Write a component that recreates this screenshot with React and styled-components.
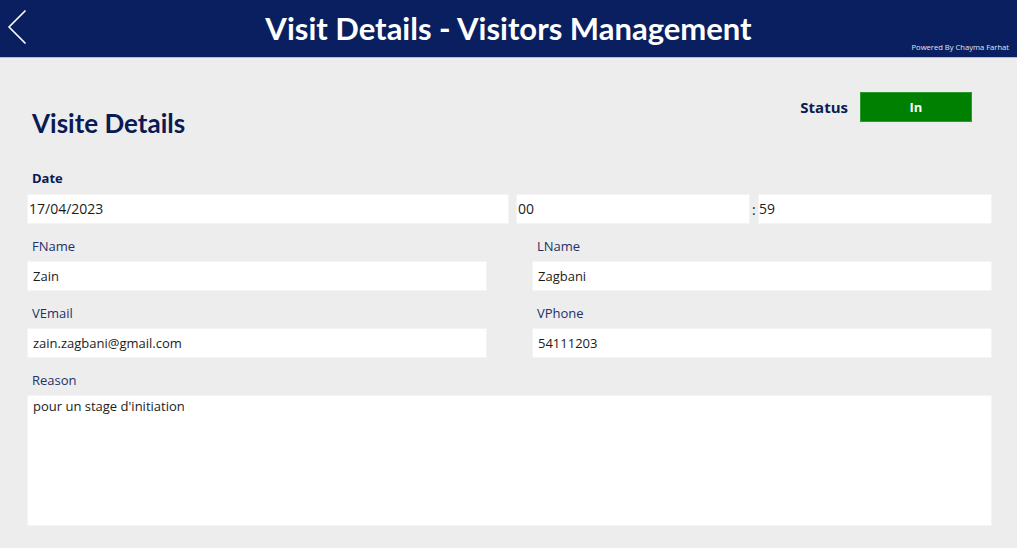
import React from "react";
import styled, { createGlobalStyle } from "styled-components";

const GlobalStyle = createGlobalStyle`
  html, body {
    margin: 0;
    padding: 0;
    background: #ededed;
    font-family: "Open Sans", "Liberation Sans", sans-serif;
  }
  * {
    box-sizing: border-box;
  }
`;

const Header = styled.header`
  height: 58px;
  background: #0a1f5f;
  border-bottom: 1px solid #b9bdca;
  display: grid;
  grid-template-columns: 1fr auto 1fr;
  align-items: start;
`;

const BackButton = styled.div`
  width: 30px;
  height: 40px;
  margin: 9px 0 0 7px;
  cursor: pointer;
`;

const Title = styled.h1`
  margin: 8px 0 0;
  font-family: Lato, "Liberation Sans", sans-serif;
  font-weight: 700;
  font-size: 31px;
  line-height: 40px;
  color: #ffffff;
  white-space: nowrap;
`;

const Powered = styled.div`
  justify-self: end;
  align-self: end;
  margin: 0 8px 5px 0;
  font-size: 7.6px;
  line-height: 10px;
  color: #e2e5ee;
  white-space: nowrap;
`;

const Main = styled.main`
  padding: 34px 25px 22px 27px;
`;

const TopRow = styled.div`
  display: flex;
  justify-content: space-between;
  align-items: flex-start;
  padding-right: 20px;
`;

const Heading = styled.h2`
  margin: 15px 0 0 5px;
  font-family: Lato, "Liberation Sans", sans-serif;
  font-weight: 700;
  font-size: 26px;
  line-height: 32px;
  color: #0b1a52;
`;

const StatusGroup = styled.div`
  display: flex;
  align-items: center;
  gap: 12px;
`;

const StatusLabel = styled.span`
  font-weight: 700;
  font-size: 15px;
  color: #0b1a52;
`;

const StatusBadge = styled.div`
  width: 112px;
  height: 30px;
  background: ${(p) => p.$color};
  border: 1px solid #2a9a2a;
  color: #ffffff;
  font-weight: 700;
  font-size: 13px;
  display: flex;
  align-items: center;
  justify-content: center;
`;

const Label = styled.div`
  padding-left: 5px;
  font-size: 13px;
  line-height: 18px;
  font-weight: ${(p) => (p.$bold ? 700 : 400)};
  color: ${(p) => (p.$bold ? "#0b1a52" : "#24306a")};
`;

const DateBlock = styled.div`
  margin-top: 30px;
  display: flex;
  flex-direction: column;
  gap: 7px;
`;

const DateRow = styled.div`
  display: grid;
  grid-template-columns: 489px 234px 8px 234px;
  align-items: center;
`;

const Box = styled.div`
  width: ${(p) => (p.$width ? `${p.$width}px` : "auto")};
  height: ${(p) => p.$height || 30}px;
  background: #ffffff;
  border: 1px solid #f4f4f4;
  padding: ${(p) => p.$pad || "0 5px"};
  font-size: ${(p) => p.$size || 13}px;
  line-height: ${(p) => (p.$height ? "18px" : "28px")};
  color: #1c1c1c;
  white-space: nowrap;
  overflow: hidden;
`;

const Colon = styled.span`
  font-size: 14px;
  color: #1c1c1c;
  padding-left: 2px;
`;

const FieldGrid = styled.div`
  display: grid;
  grid-template-columns: 460px 460px;
  column-gap: 45px;
`;

const Field = styled.div`
  margin-top: 13px;
  display: flex;
  flex-direction: column;
  gap: 6px;
`;

const Chevron = () => (
  <svg width="30" height="40" viewBox="0 0 30 40">
    <path
      d="M18 2 L2 18 L18 34"
      fill="none"
      stroke="#ffffff"
      strokeWidth="1.7"
      strokeLinecap="round"
      strokeLinejoin="round"
    />
  </svg>
);

const fields = [
  { label: "FName", value: "Zain" },
  { label: "LName", value: "Zagbani" },
  { label: "VEmail", value: "zain.zagbani@gmail.com" },
  { label: "VPhone", value: "54111203" },
];

export default function App() {
  return (
    <>
      <GlobalStyle />
      <Header>
        <BackButton>
          <Chevron />
        </BackButton>
        <Title>Visit Details - Visitors Management</Title>
        <Powered>Powered By Chayma Farhat</Powered>
      </Header>
      <Main>
        <TopRow>
          <Heading>Visite Details</Heading>
          <StatusGroup>
            <StatusLabel>Status</StatusLabel>
            <StatusBadge $color="#008000">In</StatusBadge>
          </StatusGroup>
        </TopRow>

        <DateBlock>
          <Label $bold>Date</Label>
          <DateRow>
            <Box $width={482} $size={14} $pad="0 1px">17/04/2023</Box>
            <Box $size={14} $pad="0 1px">00</Box>
            <Colon>:</Colon>
            <Box $size={14} $pad="0">59</Box>
          </DateRow>
        </DateBlock>

        <FieldGrid>
          {fields.map((f) => (
            <Field key={f.label}>
              <Label>{f.label}</Label>
              <Box>{f.value}</Box>
            </Field>
          ))}
        </FieldGrid>

        <Field>
          <Label>Reason</Label>
          <Box $height={131} $pad="1px 5px">
            pour un stage d'initiation
          </Box>
        </Field>
      </Main>
    </>
  );
}
